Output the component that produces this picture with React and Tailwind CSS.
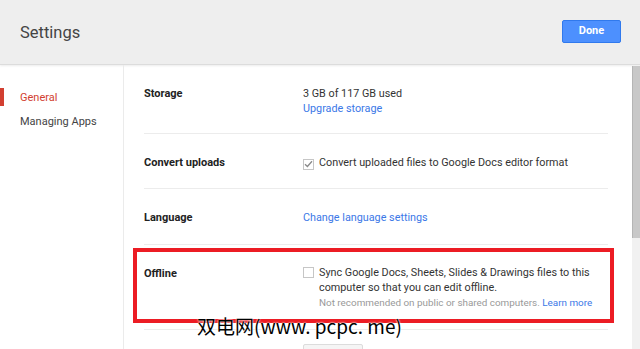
const rows = [
  { label: "Storage" },
  { label: "Convert uploads" },
  { label: "Language" },
];

const Check = ({ checked }) => (
  <span className="mt-[2px] flex h-[11px] w-[11px] shrink-0 items-center justify-center border border-[#c6c6c6] bg-white">
    {checked ? (
      <svg width="9" height="8" viewBox="0 0 9 8" fill="none">
        <path d="M1 4.2 L3.4 6.5 L8 1.2" stroke="#8a8a8a" strokeWidth="1.3" />
      </svg>
    ) : null}
  </span>
);

const App = () => {
  return (
    <div className="relative h-[349px] w-[640px] overflow-hidden bg-white font-['Roboto',sans-serif] text-[#333]">
      <header className="flex h-[65px] items-start justify-between border-b border-[#dcdcdc] bg-[#eeeeee] pl-5 pr-[19px] shadow-[0_1px_2px_rgba(0,0,0,0.08)]">
        <h1 className="mt-[22px] text-[16.5px] leading-[22px] text-[#444]">Settings</h1>
        <button className="mt-5 h-[23px] w-[59px] rounded-[2px] border border-[#3079ed] bg-[#4d90fe] text-[11px] font-bold text-white">
          Done
        </button>
      </header>

      <div className="flex h-[284px]">
        <nav className="w-[124px] shrink-0 border-r border-[#ebebeb] pt-[23px]">
          <div className="flex h-[18px] items-center">
            <span className="h-[18px] w-[4px] bg-[#d23f31]" />
            <span className="ml-4 pt-[2px] text-[11px] text-[#d23f31]">General</span>
          </div>
          <p className="ml-5 mt-[8px] text-[11px] leading-[16px] text-[#444]">Managing Apps</p>
        </nav>

        <main className="flex-1 pl-5 pr-6">
          <div className="flex h-[69px] border-b border-[#ececec] pt-[21px]">
            <p className="w-[159px] text-[11px] font-bold leading-[15px] text-[#222]">{rows[0].label}</p>
            <div className="text-[10.8px] leading-[15px]">
              <p className="text-[#333]">3 GB of 117 GB used</p>
              <p className="text-[#3b78e7]">Upgrade storage</p>
            </div>
          </div>

          <div className="flex h-[55px] items-center border-b border-[#ececec] pt-[4px]">
            <p className="w-[159px] text-[11px] font-bold text-[#222]">{rows[1].label}</p>
            <div className="flex items-center gap-[5px] text-[10.8px] text-[#333]">
              <Check checked />
              <span>Convert uploaded files to Google Docs editor format</span>
            </div>
          </div>

          <div className="flex h-[56px] items-center border-b border-[#ececec] pt-[4px]">
            <p className="w-[159px] text-[11px] font-bold text-[#222]">{rows[2].label}</p>
            <span className="text-[10.8px] text-[#3b78e7]">Change language settings</span>
          </div>

          <div className="flex h-[85px] border-b border-[#ececec] pt-[20px]">
            <p className="w-[159px] pt-[1px] text-[11px] font-bold leading-[15px] text-[#222]">Offline</p>
            <div className="flex gap-[5px]">
              <Check />
              <div className="text-[10.8px] leading-[15px] text-[#333]">
                <p>Sync Google Docs, Sheets, Slides &amp; Drawings files to this</p>
                <p>computer so that you can edit offline.</p>
                <p className="text-[9.9px] text-[#999]">
                  Not recommended on public or shared computers. <span className="text-[#3b78e7]">Learn more</span>
                </p>
              </div>
            </div>
          </div>

          <div className="ml-[159px] mt-[14px] h-[20px] w-[60px] rounded-[2px] border border-[#dcdcdc] bg-[#f5f5f5]" />
        </main>

        <div className="w-[8px] shrink-0 bg-[#f1f1f1]">
          <div className="mt-[1px] h-[172px] border-l border-[#b5b5b5] bg-[#c8c8c8]" />
        </div>
      </div>

      <div className="absolute left-[133px] top-[248px] h-[75px] w-[481px] border-4 border-[#ec1c24]" />

      <p className="absolute left-[197px] top-[314px] font-['Noto_Sans_CJK_SC',sans-serif] text-[19px] leading-[24px] text-black [text-shadow:0_0_2px_#fff,0_0_2px_#fff]">
        双电网(www. pcpc. me)
      </p>
    </div>
  );
};

export default App;
